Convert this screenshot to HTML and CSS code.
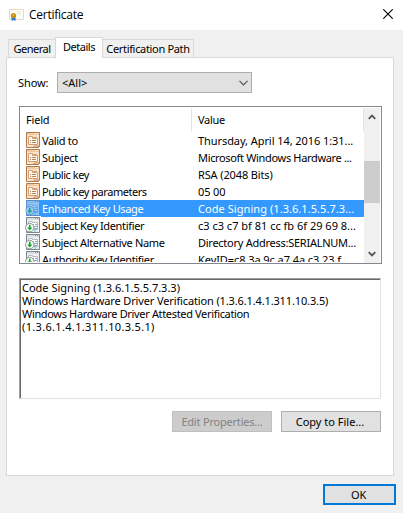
FILE: index.html
```
<!DOCTYPE html>
<html lang="en">
<head>
<meta charset="utf-8">
<title>Certificate</title>
<link rel="stylesheet" href="styles.css">
</head>
<body>
<svg width="0" height="0" class="defs">
  <symbol id="field" viewBox="0 0 16 16">
    <path d="M1.500 .5h13v14h-1v1h-12z" fill="#fbe3cb" stroke="#b07a4c"/>
    <path d="M2 1h12v2H2z" fill="#f3c9a0"/><path d="M10 1.500h1M12 1.500h1" stroke="#fff6ec"/>
    <path d="M3.500 12.500v-8h4v2h5v6z" fill="#fff6ec" stroke="#d2a075"/>
    <path d="M8 5.500h4" stroke="#d2a075"/>
    <path d="M5 8.500h1m1 0h4M5 10.500h1m1 0h4" stroke="#b98455"/>
    <path d="M9 15.500v-1.500h5" fill="none" stroke="#c08a5c"/>
  </symbol>
  <symbol id="ext" viewBox="0 0 16 16">
    <path d="M1.500 .5h13v15h-13z" fill="#eef0f2" stroke="#7e8488"/>
    <path d="M2 1h12v2H2z" fill="#dde0e3"/><path d="M10 1.500h1m1 0h1" stroke="#8b9298"/>
    <path d="M3.500 12.500v-8h4v1h5v7z" fill="#fff" stroke="#b0bac4"/>
    <path d="M8 7.500h1m1 0h2M9 9.500h3M9 11.500h3" stroke="#8fa3b8"/><path d="M9 14h2" stroke="#35cee6"/>
    <circle cx="4.700" cy="10.600" r="4.200" fill="#fbfffb" stroke="#8f9690"/>
    <path d="M3.900 7.800h1.700v2.700h1.900L4.750 13.500 2 10.500h1.900z" fill="#1fa32b"/>
  </symbol>
</svg>
<header class="titlebar">
  <svg class="cert" width="16" height="13" viewBox="0 0 16 13"><path d="M.5 .5h14v10H.5z" fill="#fffdf4" stroke="#ead7bd"/><path d="M7 3h5M8 5h4" stroke="#e8e4dc"/><path d="M2.500 7v5l2-1 2 1V7z" fill="#2979dd"/><circle cx="4.500" cy="6.500" r="2.600" fill="#c78a0b"/><circle cx="4.500" cy="6" r="1" fill="#e9b83c"/></svg>
  <h1 class="title">Certificate</h1>
  <svg class="close" width="10" height="10" viewBox="0 0 10 10"><path d="M.3 .3l9.400 9.400M9.700 .3L.3 9.700" stroke="#000" stroke-width="1.100"/></svg>
</header>
<nav class="tabs">
  <div class="tab general">General</div>
  <div class="tab active">Details</div>
  <div class="tab path">Certification Path</div>
</nav>
<main class="panel">
  <div class="show"><span class="show-label">Show:</span>
    <div class="combo"><span>&lt;All&gt;</span><svg width="9" height="6" viewBox="0 0 9 6"><path d="M.5 .8l4 4 4-4" fill="none" stroke="#555" stroke-width="1.200"/></svg></div>
  </div>
  <div class="list">
    <div class="rows">
      <div class="head"><span class="hfield">Field</span><span class="hvalue">Value</span></div>
      <div class="row"><svg class="ic"><use href="#field"/></svg><span class="name snug">Valid to</span><span class="level">Thursday, April 14, 2016 1:31...</span></div>
      <div class="row"><svg class="ic"><use href="#field"/></svg><span class="name close-set">Subject</span><span class="snug">Microsoft Windows Hardware ...</span></div>
      <div class="row"><svg class="ic"><use href="#field"/></svg><span class="name tight">Public key</span><span class="slight">RSA (2048 Bits)</span></div>
      <div class="row"><svg class="ic"><use href="#field"/></svg><span class="name tight">Public key parameters</span><span class="slight">05 00</span></div>
      <div class="row selected"><svg class="ic"><use href="#ext"/></svg><span class="name snug">Enhanced Key Usage</span><span class="loose">Code Signing (1.3.6.1.5.5.7.3...</span></div>
      <div class="row"><svg class="ic"><use href="#ext"/></svg><span class="name snug">Subject Key Identifier</span><span>c3 c3 c7 bf 81 cc fb 6f 29 69 8...</span></div>
      <div class="row"><svg class="ic"><use href="#ext"/></svg><span class="name snug">Subject Alternative Name</span><span class="close-set">Directory Address:SERIALNUM...</span></div>
      <div class="row partial"><svg class="ic"><use href="#ext"/></svg><span class="name snug">Authority Key Identifier</span><span class="level">KeyID=c8 3a 9c a7 4a c3 23 f...</span></div>
    </div>
    <div class="scroll">
      <svg width="8" height="6" viewBox="0 0 8 6"><path d="M.7 4.800L4 1.500l3.300 3.300" fill="none" stroke="#555" stroke-width="1.800"/></svg>
      <div class="thumb"></div>
      <svg class="down" width="8" height="6" viewBox="0 0 8 6"><path d="M.7 1.200L4 4.500l3.300-3.300" fill="none" stroke="#555" stroke-width="1.800"/></svg>
    </div>
  </div>
  <div class="detail">
    <div>Code Signing (1.3.6.1.5.5.7.3.3)</div>
    <div class="slight">Windows Hardware Driver Verification (1.3.6.1.4.1.311.10.3.5)</div>
    <div class="snug">Windows Hardware Driver Attested Verification</div>
    <div class="wide">(1.3.6.1.4.1.311.10.3.5.1)</div>
  </div>
  <div class="actions"><button class="btn edit" disabled>Edit Properties...</button><button class="btn copy">Copy to File...</button></div>
</main>
<footer class="footer"><button class="btn ok">OK</button></footer>
</body>
</html>
```
FILE: styles.css
```
* { box-sizing: border-box; }
body { margin: 0; width: 403px; height: 513px; overflow: hidden; background: #f0f0f0; color: #000; font: 11px/13px "Noto Sans", sans-serif; white-space: nowrap; }
.defs { position: absolute; }
svg { display: block; flex: none; }
.titlebar { height: 30px; background: #fff; display: flex; align-items: center; padding: 0 10px 0 9px; }
.cert { margin-right: 4px; margin-top: 1px; }
.title { margin: 0; flex: 1; font: 12px/16px "Open Sans", sans-serif; letter-spacing: -.25px; }
.close { margin-bottom: 2px; }
.tabs { height: 28px; padding: 7px 0 0 8px; display: flex; align-items: flex-end; position: relative; z-index: 1; }
.tab { height: 19px; border: 1px solid #d9d9d9; border-left: 0; background: #f0f0f0; text-align: center; line-height: 18px; letter-spacing: -.5px; }
.general { width: 47px; border-left: 1px solid #d9d9d9; border-right: 0; }
.active { width: 48px; height: 21px; background: #fff; border-left: 1px solid #d9d9d9; border-bottom: 0; line-height: 18px; }
.path { width: 91px; letter-spacing: -.33px; }
.panel { margin: -1px 9px 0 6px; height: 419px; background: #fff; border: 1px solid #d9d9d9; padding: 14px 12px; }
.show { display: flex; align-items: center; height: 21px; }
.show-label { width: 39px; margin-left: -1px; letter-spacing: -.1px; }
.combo { width: 195px; height: 21px; border: 1px solid #adadad; background: #e1e1e1; display: flex; align-items: center; justify-content: space-between; padding: 0 3px 0 4px; }
.list { margin-top: 13px; height: 158px; width: 363px; border: 1px solid #828790; display: flex; padding: 1px 1px 0 1px; overflow: hidden; }
.rows { width: 343px; }
.head { height: 24px; display: flex; line-height: 23px; }
.hfield { width: 171px; padding-left: 5px; border-right: 1px solid #e5e5e5; letter-spacing: -.2px; }
.hvalue { flex: 1; padding-left: 6px; border-right: 1px solid #e5e5e5; letter-spacing: -.3px; }
.row { height: 17px; display: flex; padding-left: 4px; line-height: 18px; }
.partial { height: 11px; overflow: hidden; }
.ic { width: 16px; height: 16px; margin-right: 1px; }
.name { width: 156px; }
.tight { letter-spacing: -.46px; }
.snug { letter-spacing: -.34px; }
.close-set { letter-spacing: -.26px; }
.slight { letter-spacing: -.13px; }
.level { letter-spacing: -.07px; }
.loose { letter-spacing: .06px; }
.wide { letter-spacing: .33px; }
.selected { color: #fff; background: linear-gradient(90deg, transparent 20px, #3399ff 20px); }
.selected .ic { background: linear-gradient(90deg, transparent 1px, #3399ff 1px); }
.selected .ic use { opacity: .5; }
.scroll { width: 16px; background: #f0f0f0; display: flex; flex-direction: column; align-items: center; padding: 6px 0 6px; }
.thumb { width: 16px; height: 42px; background: #cdcdcd; margin-top: 41px; }
.down { margin-top: auto; }
.detail { margin-top: 14px; height: 121px; width: 362px; border: 1px solid #e3e3e3; border-top-color: #a0a0a0; border-left-color: #a0a0a0; box-shadow: inset 1px 1px #696969; padding: 2px 1px 2px 2px; }
.actions { margin-top: 12px; display: flex; gap: 9px; justify-content: flex-end; }
.btn { font: inherit; color: #000; width: 100px; height: 21px; border: 1px solid #adadad; background: #e1e1e1; padding: 0; }
.edit { background: #ccc; border-color: #bfbfbf; color: #838383; letter-spacing: -.2px; }
.copy { padding-right: 2px; }
.footer { display: flex; justify-content: flex-end; padding: 8px 7px 0 0; }
.ok { width: 73px; border: 2px solid #0078d7; padding-right: 2px; letter-spacing: -.3px; }
```
